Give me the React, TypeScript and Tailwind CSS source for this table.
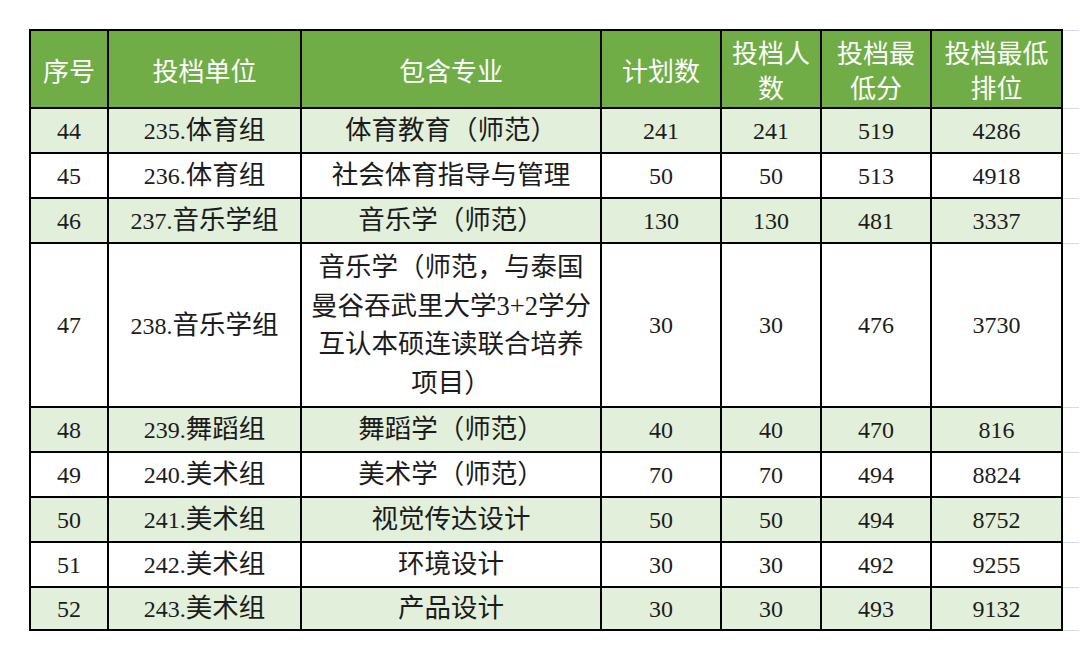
import * as React from "react";

type Row = {
	no: string;
	unit: string;
	major: string;
	plan: string;
	admitted: string;
	minScore: string;
	minRank: string;
	tall?: boolean;
};

const rows: Row[] = [
	{ no: "44", unit: "235.体育组", major: "体育教育（师范）", plan: "241", admitted: "241", minScore: "519", minRank: "4286" },
	{ no: "45", unit: "236.体育组", major: "社会体育指导与管理", plan: "50", admitted: "50", minScore: "513", minRank: "4918" },
	{ no: "46", unit: "237.音乐学组", major: "音乐学（师范）", plan: "130", admitted: "130", minScore: "481", minRank: "3337" },
	{
		no: "47",
		unit: "238.音乐学组",
		major: "音乐学（师范，与泰国曼谷吞武里大学3+2学分互认本硕连读联合培养项目）",
		plan: "30",
		admitted: "30",
		minScore: "476",
		minRank: "3730",
		tall: true,
	},
	{ no: "48", unit: "239.舞蹈组", major: "舞蹈学（师范）", plan: "40", admitted: "40", minScore: "470", minRank: "816" },
	{ no: "49", unit: "240.美术组", major: "美术学（师范）", plan: "70", admitted: "70", minScore: "494", minRank: "8824" },
	{ no: "50", unit: "241.美术组", major: "视觉传达设计", plan: "50", admitted: "50", minScore: "494", minRank: "8752" },
	{ no: "51", unit: "242.美术组", major: "环境设计", plan: "30", admitted: "30", minScore: "492", minRank: "9255" },
	{ no: "52", unit: "243.美术组", major: "产品设计", plan: "30", admitted: "30", minScore: "493", minRank: "9132" },
];

// CJK runs are set a little larger than the digits, as in the sheet
function Mixed({ text }: { text: string }) {
	const parts = text.split(/([\u3000-\u9fff\uff00-\uffef]+)/).filter((p) => p !== "");
	return (
		<>
			{parts.map((p, i) =>
				/[\u3000-\u9fff\uff00-\uffef]/.test(p) ? (
					<span key={i} className="text-[26.5px]">
						{p}
					</span>
				) : (
					<span key={i}>{p}</span>
				),
			)}
		</>
	);
}

const cell = "border-2 border-black text-center align-middle p-0";
const spare = "border-0 border-y border-[#d3dae8] p-0 w-[17px] bg-white";

export default function App() {
	return (
		<div className="w-[1080px] h-[660px] bg-white pl-[29px] pt-[29px] overflow-hidden">
			<table
				className="border-collapse text-[#1c1c1c] text-[24px] leading-none"
				style={{ fontFamily: '"Liberation Serif", "Noto Sans CJK SC", serif' }}
			>
				<colgroup>
					<col className="w-[78px]" />
					<col className="w-[193px]" />
					<col className="w-[300px]" />
					<col className="w-[120px]" />
					<col className="w-[100px]" />
					<col className="w-[110px]" />
					<col className="w-[131px]" />
					<col className="w-[17px]" />
				</colgroup>
				<thead>
					<tr
						className="h-[78px] bg-[#70ad47] text-white text-[26px] leading-[35px]"
						style={{ fontFamily: '"Noto Sans CJK SC", sans-serif' }}
					>
						<th className={cell + " font-normal"}>序号</th>
						<th className={cell + " font-normal"}>投档单位</th>
						<th className={cell + " font-normal"}>包含专业</th>
						<th className={cell + " font-normal"}>计划数</th>
						<th className={cell + " font-normal"}>
							投档人
							<br />
							数
						</th>
						<th className={cell + " font-normal"}>
							投档最
							<br />
							低分
						</th>
						<th className={cell + " font-normal"}>
							投档最低
							<br />
							排位
						</th>
						<th className={spare} />
					</tr>
				</thead>
				<tbody>
					{rows.map((r, i) => (
						<tr
							key={r.no}
							className={
								(i % 2 === 0 ? "bg-[#e2efda] " : "bg-white ") +
								(r.tall ? "h-[164px]" : i === rows.length - 1 ? "h-[43px]" : "h-[45px]")
							}
						>
							<td className={cell}>{r.no}</td>
							<td className={cell}>
								<Mixed text={r.unit} />
							</td>
							{r.tall ? (
								<td className={cell + " px-[9px] text-[26.5px] leading-[38.5px]"}>{r.major}</td>
							) : (
								<td className={cell}>
									<Mixed text={r.major} />
								</td>
							)}
							<td className={cell}>{r.plan}</td>
							<td className={cell}>{r.admitted}</td>
							<td className={cell}>{r.minScore}</td>
							<td className={cell}>{r.minRank}</td>
							<td className={spare} />
						</tr>
					))}
				</tbody>
			</table>
		</div>
	);
}
